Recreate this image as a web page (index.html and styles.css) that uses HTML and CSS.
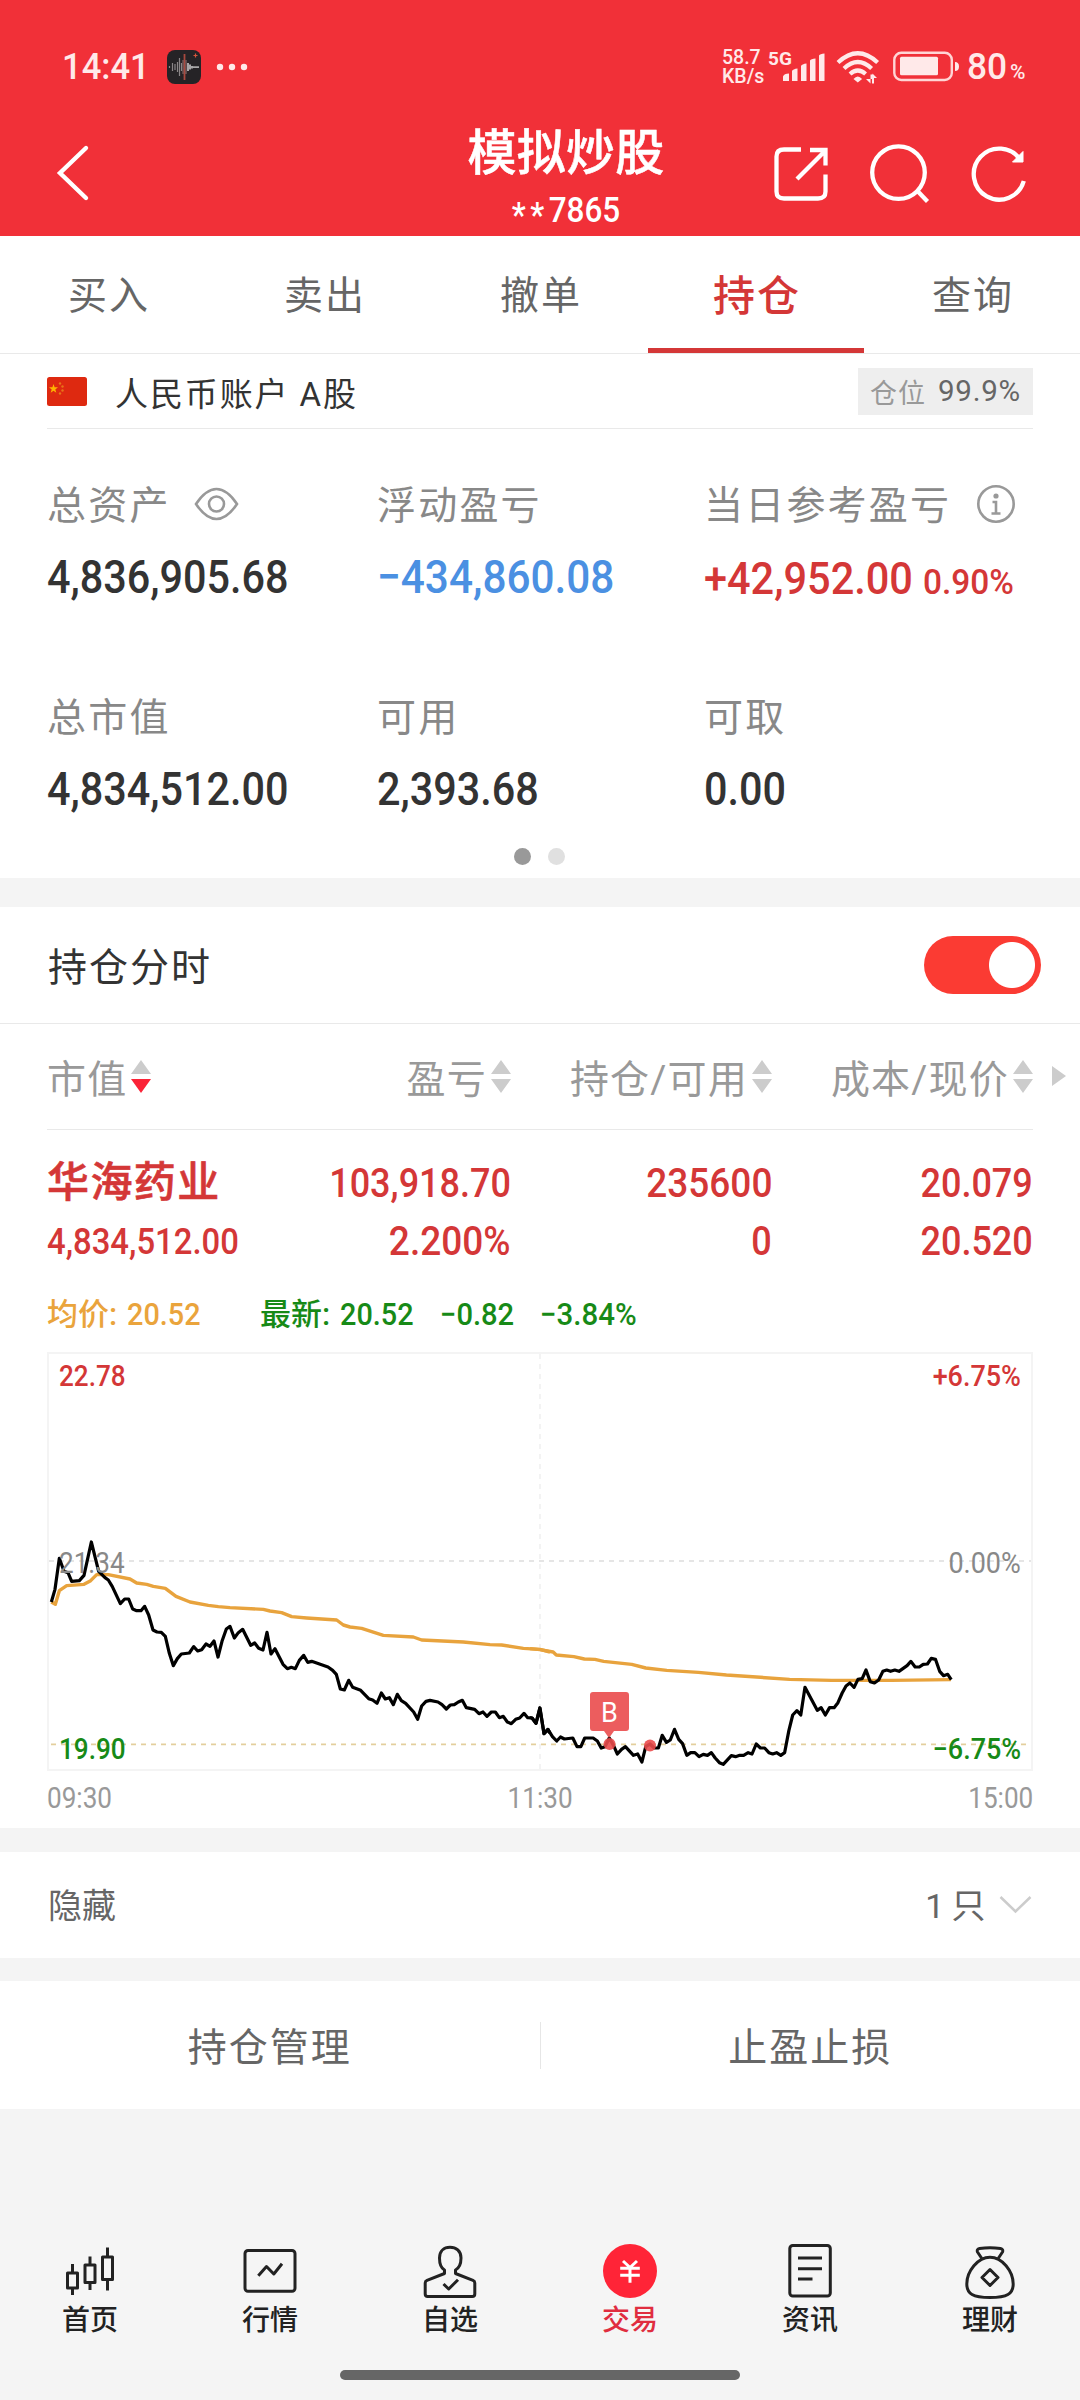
FILE: index.html
```html
<!DOCTYPE html>
<html lang="zh-CN">
<head>
<meta charset="utf-8">
<title>模拟炒股</title>
<link rel="stylesheet" href="styles.css">
</head>
<body>
<header class="top">
  <div class="status">
    <span class="clock"><span class="num">14:41</span></span>
    <svg class="app" width="34" height="34" viewBox="0 0 34 34"><rect width="34" height="34" rx="8" fill="#252326"/><path d="M2.500 16v2M5.500 13v8M8 14v6M10.500 12v10M12.500 8v18M14.500 13v8" stroke="#8b8688" stroke-width="1.200"/><path d="M17.500 4v26" stroke="#a8493f" stroke-width="1.800"/><path d="M16 10v14M19 10v14" stroke="#94716e"/><path d="M21 13v8M23 14.500v5M25 16v2.500M27 16.300v1.800M29 16.300v1.800M31 16.300v1.800" stroke="#eee" stroke-width="1.300"/><path d="M26.500 5.500h4M28.500 3.500v4" stroke="#d4553d" stroke-width="1.200"/></svg>
    <svg class="more" width="32" height="8" viewBox="0 0 32 8" fill="#ffe9e9"><circle cx="4" cy="4" r="3.200"/><circle cx="16" cy="4" r="3.200"/><circle cx="28" cy="4" r="3.200"/></svg>
    <span class="speed"><span>58.7</span><span>KB/s</span></span>
    <span class="net">5G</span>
    <svg class="sys" width="178" height="36" viewBox="782 49 178 36" fill="#ffe9e9">
      <path d="M783 81v-4.500q1-3 6-3V81zM792 81V71q1-2 5.500-2.500V81zM801 81V66q1-2 5.500-2.500V81zM810 81V60.500q1-1.500 5.500-2V81zM819 81V55.500q1-1.500 5.500-2V81z"/>
      <g fill="none" stroke="#ffe9e9" stroke-width="4.200"><path d="M838 62.500q19.800-18.500 39.600 0"/><path d="M844 68.500q13.800-13 27.600 0"/><path d="M850 74q7.800-7 15.600 0"/></g>
      <path d="M853.500 79q4.300-5 8.600 0l-4.300 3.500zM866 79l4.500 4.500V74.500h2v-1l4.500 4.500h-3v5.500h-2V79z"/>
      <rect x="894.300" y="52.800" width="57.500" height="27.200" rx="7" fill="none" stroke="#ffd5d5" stroke-width="2.400"/>
      <rect x="900" y="56.800" width="38" height="18.400" rx="1.500"/><path d="M955 62q4 0 4 4.500t-4 4.500z"/>
    </svg>
    <span class="bat"><span class="num">80</span></span><span class="pct">%</span>
  </div>
  <div class="titlebar">
    <svg width="34" height="58" viewBox="56 146 34 58"><path d="M86 150 60 175l26 25" fill="none" stroke="#fff" stroke-width="4.400" stroke-linecap="round"/></svg>
    <div class="title"><h1>模拟炒股</h1><p><span class="mask">**</span>7865</p></div>
    <svg width="256" height="62" viewBox="772 144 256 62" fill="none" stroke="#fff" stroke-width="4.300">
      <path d="M800 150.500h-17q-7.500 0-7.500 7v35q0 7 7.500 7h34q7.500 0 7.500-7v-17M809 151h15.500v15.500M824 152l-28 28"/>
      <circle cx="897.500" cy="173.600" r="26.300"/><path d="M916 191.500l10.500 11"/>
      <path d="M1019.500 161A25.500 25.500 0 1 0 1022.800 182"/><path d="M1022 152.500V163h-10.500z" fill="#fff" stroke-width="1"/>
    </svg>
  </div>
</header>

<nav class="tabs"><span>买入</span><span>卖出</span><span>撤单</span><span class="on">持仓</span><span>查询</span></nav>

<section class="account">
  <svg width="40" height="29" viewBox="0 0 40 29"><rect width="40" height="29" rx="2.500" fill="#de2910"/><path d="M6.500 7l1.100 3.300h3.400L8.300 12.400l1 3.300-2.800-2-2.800 2 1-3.300L2 10.300h3.400z" fill="#ffb400"/><g fill="#e8731a"><circle cx="13" cy="6.500" r="1.200"/><circle cx="15.500" cy="9.500" r="1.200"/><circle cx="15.500" cy="13.500" r="1.200"/><circle cx="13" cy="16.500" r="1.200"/></g></svg>
  <span class="name">人民币账户 A股</span>
  <span class="badge"><i>仓位</i><b>99.9%</b></span>
</section>

<section class="summary">
  <div class="grid">
    <div><p class="lab">总资产<svg class="eye" width="45" height="34" viewBox="0 0 45 34" fill="none" stroke="#999" stroke-width="2.600"><path d="M2 17Q12 2 22.500 2T43 17Q33 32 22.500 32T2 17z"/><circle cx="22.500" cy="17" r="7.500"/></svg></p><p class="val"><span class="num">4,836,905.68</span></p></div>
    <div><p class="lab">浮动盈亏</p><p class="val blue"><span class="num">−434,860.08</span></p></div>
    <div><p class="lab">当日参考盈亏<svg class="info" width="40" height="40" viewBox="0 0 40 40" fill="none" stroke="#999" stroke-width="2.600"><circle cx="20" cy="20" r="17.700"/><circle cx="20" cy="12" r="2.600" fill="#999" stroke="none"/><path d="M16.500 18H20v11.500M15.500 29.500h9"/></svg></p><p class="val red day"><span class="num">+42,952.00</span><span class="num rate">0.90%</span></p></div>
    <div><p class="lab">总市值</p><p class="val"><span class="num">4,834,512.00</span></p></div>
    <div><p class="lab">可用</p><p class="val"><span class="num">2,393.68</span></p></div>
    <div><p class="lab">可取</p><p class="val"><span class="num">0.00</span></p></div>
  </div>
  <div class="dots"><i></i><i></i></div>
</section>

<section class="switchrow"><span>持仓分时</span><i class="switch"></i></section>

<section class="holding">
  <div class="cols head">
    <span>市值<svg width="20" height="34" viewBox="0 0 20 34"><path d="M10 0l10 14H0z" fill="#ccc"/><path d="M0 19h20L10 33z" fill="#fb2337"/></svg></span>
    <span>盈亏<svg width="20" height="34" viewBox="0 0 20 34" fill="#ccc"><path d="M10 0l10 14H0zM0 19h20L10 33z"/></svg></span>
    <span>持仓/可用<svg width="20" height="34" viewBox="0 0 20 34" fill="#ccc"><path d="M10 0l10 14H0zM0 19h20L10 33z"/></svg></span>
    <span>成本/现价<svg width="20" height="34" viewBox="0 0 20 34" fill="#ccc"><path d="M10 0l10 14H0zM0 19h20L10 33z"/></svg></span>
    <i class="next"></i>
  </div>
  <div class="cols data first"><span class="stock">华海药业</span><span class="num">103,918.70</span><span class="num wide">235600</span><span class="num">20.079</span></div>
  <div class="cols data"><span class="num small">4,834,512.00</span><span class="num wide">2.200%</span><span class="num">0</span><span class="num">20.520</span></div>
  <div class="legend"><span class="avg">均价: <span class="num">20.52</span></span><span class="last">最新: <span class="num">20.52</span></span><span class="num chg">−0.82</span><span class="num chg2">−3.84%</span></div>
  <div class="chart">
    <svg width="986" height="419" viewBox="0 0 986 419" fill="none">
      <rect x="1" y="1" width="984" height="417" stroke="#f4f4f4" stroke-width="2"/>
      <path d="M493 2v415" stroke="#f0f0f0" stroke-width="1.500" stroke-dasharray="5 5"/>
      <path d="M2 209h982" stroke="#ddd" stroke-width="1.700" stroke-dasharray="5 5"/>
      <path d="M4 392.300h976" stroke="#e3cf9d" stroke-width="1.700" stroke-dasharray="5 5"/>
      <g stroke-linejoin="round">
        <g transform="translate(-17 -12) scale(.33333)">
          <polyline class="ma" points="64,786 76,793 88,752 110,737 162,733 182,722 200,704 235,704 300,717 320,729 350,733 370,739 406,745 438,769 480,786 535,796 565,800 600,803 700,808 720,813 755,818 785,830 830,834 920,840 940,855 960,861 995,865 1060,886 1150,891 1175,900 1300,906 1380,914 1415,915 1480,925 1530,928 1560,936"/>
          <polyline class="px" points="64,786 75,748 88,655 102,694 114,698 125,724 148,722 162,706 184,606 206,694 225,713 235,720 247,740 271,791 284,777 296,777 308,807 320,812 333,812 344,799 356,825 369,870 381,876 394,877 406,889 418,940 430,977 442,956 454,942 478,939 491,920 503,933 515,929 528,912 540,919 552,903 564,951 576,904 589,867 600,859 613,894 625,878 638,868 662,916 674,909 686,925 699,930 711,877 723,942 735,926 759,973 772,986 784,982 796,986 808,961 821,946 833,967 845,964 894,981 908,991 919,1003 931,1047 943,1050 956,1021 968,1042 992,1051 1016,1076 1028,1080 1041,1090 1054,1059 1066,1077 1078,1073 1090,1094 1102,1063 1114,1082 1127,1090 1151,1116 1163,1138 1175,1098 1188,1084 1200,1081 1224,1086 1236,1094 1249,1107 1261,1095 1273,1094 1285,1086 1297,1081 1309,1103 1334,1108 1347,1121 1359,1116 1371,1129 1384,1116 1396,1116 1408,1133 1420,1129 1432,1146 1444,1151 1457,1138 1469,1134 1482,1120 1493,1133 1506,1134 1518,1150 1530,1104 1542,1181 1554,1168 1560,1180"/>
        </g>
        <g transform="translate(483 -12) scale(.35075 .33333)">
          <polyline class="ma" points="0,926 28,929 66,936 75,945 125,950 155,957 185,958 210,964 290,973 330,984 390,991 480,997 560,1005 740,1018 860,1021 1030,1021 1200,1019"/>
          <polyline class="px" points="0,1133 6,1134 17,1150 28,1104 40,1181 51,1168 64,1190 76,1203 87,1191 98,1197 122,1194 134,1220 145,1220 156,1194 180,1194 192,1203 203,1224 214,1220 226,1194 238,1216 249,1242 261,1228 272,1220 295,1246 307,1242 319,1266 330,1220 342,1212 354,1224 366,1224 377,1186 389,1207 400,1200 412,1168 424,1198 435,1211 447,1246 458,1238 470,1238 482,1250 494,1243 506,1246 517,1238 528,1254 540,1268 551,1273 574,1247 586,1250 598,1246 609,1246 622,1238 633,1242 645,1212 657,1224 669,1224 681,1238 692,1242 703,1238 715,1246 726,1238 738,1172 749,1125 761,1112 772,1125 784,1042 819,1111 830,1103 842,1125 854,1103 867,1103 878,1088 890,1059 901,1038 912,1029 924,1042 935,1018 947,1016 958,990 970,1025 982,1029 994,1020 1006,994 1017,990 1028,994 1040,990 1052,994 1075,977 1086,964 1098,981 1110,981 1121,973 1133,972 1144,955 1156,958 1168,994 1179,1007 1191,1003 1201,1019"/>
        </g>
      </g>
      <g fill="#ea4b4d" fill-opacity=".9"><path d="M546 340h33a3 3 0 0 1 3 3v33a3 3 0 0 1-3 3h-12l-5 7-5-7h-11a3 3 0 0 1-3-3v-33a3 3 0 0 1 3-3z"/><circle cx="562.500" cy="392" r="6"/><circle cx="603" cy="393.500" r="6"/></g>
    </svg>
    <span class="tag">B</span>
    <div class="axis"><div class="red"><span class="num">22.78</span><span class="num">+6.75%</span></div><div class="gray"><span class="num">21.34</span><span class="num">0.00%</span></div><div class="green"><span class="num">19.90</span><span class="num">−6.75%</span></div></div>
  </div>
  <div class="times"><span class="num">09:30</span><span class="num">11:30</span><span class="num">15:00</span></div>
</section>

<section class="hidden-row"><span>隐藏</span><span class="count">1 只</span><svg width="33" height="20" viewBox="0 0 33 20"><path d="M1.500 2 16.500 16.500 31.500 2" fill="none" stroke="#ccc" stroke-width="2.500"/></svg></section>
<section class="actions"><span>持仓管理</span><i></i><span>止盈止损</span></section>

<footer class="nav">
  <a><svg viewBox="0 0 64 64"><path d="M9.500 33h10v15h-10zM14.500 24v9m0 15v7M27 25h10v17.500H27zM32 16.500V25m0 17.500V50M44.500 17h10v22.500h-10zM49.500 7.500V17m0 22.500v11"/></svg>首页</a>
  <a><svg viewBox="0 0 64 64"><rect x="7" y="10.500" width="50" height="40.700" rx="3"/><path d="M20.300 35.700 28.500 26.500l7.300 7.500L44 23.700"/></svg>行情</a>
  <a><svg viewBox="0 0 64 64"><path d="M26.500 30v3.500L9 40.300q-1.800.7-1.800 2.700v11q0 2.500 2.500 2.500h44.600q2.500 0 2.500-2.500V43q0-2-1.800-2.700L37.500 33.500V30C42 27.500 43 23 43 18c0-7-5-10.800-11-10.800S21.500 11 21.500 18c0 5 .5 9.500 5 12zM25.500 44l5.200 5L40 39.700"/></svg>自选</a>
  <a class="on"><svg viewBox="0 0 64 64"><circle cx="32" cy="31" r="27" fill="#ff2437" stroke="none"/><path stroke="#fff" d="M25 21l7 6.500 7-6.500M22.200 28.200h19.600M22.200 35.300h19.600M32 27v15.700"/></svg>交易</a>
  <a><svg viewBox="0 0 64 64"><rect x="11.800" y="5.500" width="40.500" height="50.500" rx="3"/><path d="M20 18h24M20 28.700h24M20 39h14.500"/></svg>资讯</a>
  <a><svg viewBox="0 0 64 64"><path d="M23.500 18l-4-6q-1-3 2-3.500 10.500-1.500 21 0 3 .5 2 3.500l-4 6M32 17.200C20 17.200 8.800 31 8.800 44c0 10 6.200 13.500 23.200 13.500S55.200 54 55.200 44C55.200 31 44 17.200 32 17.200zM32 29.500l8 8-8 8-8-8z"/></svg>理财</a>
</footer>
<div class="homebar"></div>
</body>
</html>
```
FILE: styles.css
```css
* { box-sizing: border-box; margin: 0; padding: 0; }
body { width: 1080px; height: 2400px; background: #f4f4f4; font-family: Roboto, "Noto Sans CJK SC", sans-serif; color: #333; overflow: hidden; }
i, b { font-style: normal; font-weight: inherit; }
svg { display: block; flex: none; }
section { background: #fff; }
.num { display: inline-block; transform: scaleX(.9); transform-origin: left center; white-space: nowrap; }
.red { color: #d43737; }
.blue { color: #4b90e2; }
.gray { color: #888; }
.green { color: #178a17; }

.top { height: 236px; background: #f13038; color: #ffe9e9; }
.status { height: 134px; display: flex; align-items: center; padding-left: 62px; font-size: 36px; font-weight: 500; line-height: 40px; }
.clock { width: 105px; }
.clock .num { transform: scaleX(.96); }
.more { margin-left: 15px; }
.speed { display: flex; flex-direction: column; margin-left: 474px; width: 46px; font-size: 19.500px; line-height: 19px; font-weight: 500; }
.net { width: 14px; font-size: 19px; font-weight: 700; line-height: 20px; margin-top: -17px; }
.bat { width: 43px; margin-left: 7px; }
.bat .num { transform: scaleX(.98); }
.pct { font-size: 21px; margin-top: 10px; }
.titlebar { display: flex; padding-left: 56px; color: #fff; }
.titlebar > svg { margin-top: 10px; }
.titlebar > svg:last-child { margin: 9px 0 0 107px; }
.title { width: 200px; margin: -11px 0 0 376px; text-align: center; }
.title h1 { font-size: 49px; line-height: 62px; font-weight: 500; letter-spacing: .3px; -webkit-text-stroke: .5px; }
.title p { font-size: 35px; line-height: 51px; font-weight: 500; transform: scaleX(.9); }
.mask { position: relative; top: 5px; letter-spacing: 5px; }

.tabs { height: 118px; background: #fff; border-bottom: 1px solid #e9e9e9; display: flex; }
.tabs span { flex: 1; text-align: center; font-size: 39px; letter-spacing: 2px; text-indent: 2px; line-height: 121px; color: #666; }
.tabs .on { font-size: 42px; font-weight: 500; color: #d43737; box-shadow: inset 0 -5px #d43737; height: 117px; }

.account { height: 74px; display: flex; align-items: center; padding: 0 47px; }
.account .name { margin: 1px 0 0 28px; font-size: 33px; letter-spacing: 1.900px; }
.account .badge { margin-left: auto; height: 47px; width: 175px; display: flex; align-items: center; justify-content: space-between; padding: 0 12px; background: #eee; font-size: 27px; color: #999; letter-spacing: 1px; }
.account b { font-size: 29.500px; color: #666; letter-spacing: .8px; }

.summary { height: 450px; padding-left: 47px; }
.summary::before { content: ""; display: block; height: 1px; width: 986px; background: #e9e9e9; margin-bottom: 47px; }
.grid { display: grid; grid-template-columns: 330px 327px 1fr; row-gap: 81px; }
.lab { height: 60px; line-height: 60px; font-size: 39px; letter-spacing: 2.200px; color: #888; display: flex; align-items: center; }
.eye { margin: -4px 0 0 23px; }
.info { margin: -4px 0 0 25px; }
.val { margin-top: 11px; height: 60px; line-height: 60px; font-size: 47px; font-weight: 500; }
.val .num { transform: scaleX(.88); }
.val.blue .num { transform: scaleX(.9); }
.day { font-size: 45px; position: relative; top: 2px; }
.day .num { transform: scaleX(.922); }
.day .rate { position: absolute; left: 219px; top: 3px; font-size: 34.500px; transform: scaleX(.97); }
.dots { display: flex; gap: 17px; justify-content: center; margin: 29px 49px 0 0; }
.dots i { width: 17px; height: 17px; border-radius: 50%; background: #999; }
.dots i + i { background: #e0e0e0; }

.switchrow { margin-top: 29px; height: 117px; padding: 0 39px 0 48px; display: flex; align-items: center; justify-content: space-between; font-size: 39px; letter-spacing: 2px; border-bottom: 1px solid #e9e9e9; }
.switchrow span { margin-top: -2px; }
.switch { width: 117px; height: 58px; border-radius: 29px; background: radial-gradient(circle at 88px 29px, #fff 22.500px, #fb3b33 23.500px); }

.holding { height: 805px; padding: 0 47px; border-bottom: 1px solid #f4f4f4; }
.cols { display: grid; grid-template-columns: 203px 261px 261px 261px; }
.cols > span { justify-self: end; }
.cols > span:first-child { justify-self: start; }
.head { height: 106px; border-bottom: 1px solid #e9e9e9; position: relative; }
.head span { display: flex; align-items: center; height: 103px; font-size: 39px; letter-spacing: 1.200px; color: #999; }
.head svg { margin: 2px 0 0 4px; }
.next { position: absolute; left: 1005px; top: 42px; border-left: 14px solid #ccc; border-top: 10px solid transparent; border-bottom: 10px solid transparent; }
.data { height: 58px; line-height: 58px; font-size: 40px; font-weight: 500; color: #d43737; }
.data .num { transform-origin: right center; }
.data .wide { transform: scaleX(.925); }
.data .small { font-size: 37px; transform-origin: left center; transform: scaleX(.888); }
.first { margin-top: 25px; }
.stock { font-size: 42px; letter-spacing: 1.400px; -webkit-text-stroke: .6px; margin-top: -1px; }
.legend { height: 81px; line-height: 88px; font-size: 31px; font-weight: 500; display: flex; color: #178a17; }
.avg { width: 213px; color: #eaa43c; }
.last { width: 180px; }
.avg .num, .last .num { margin-left: 2px; transform: scaleX(.93); }
.chg { width: 100px; transform: scaleX(.94); }
.chg2 { transform: scaleX(.95); }
.chart { position: relative; height: 419px; }
.ma, .px { stroke: #e8a33d; stroke-width: 3.400px; vector-effect: non-scaling-stroke; }
.px { stroke: #000; stroke-width: 3.200px; }
.tag { position: absolute; left: 543px; top: 341px; width: 39px; line-height: 40px; text-align: center; color: #fff; font-size: 27px; }
.axis { position: absolute; inset: 1px 0 -1px; padding: 0 12px; display: flex; flex-direction: column; justify-content: space-between; font-size: 29px; line-height: 46px; }
.axis div { display: flex; justify-content: space-between; font-weight: 500; }
.axis .gray { font-weight: 400; }
.axis .num + .num { transform-origin: right center; transform: scaleX(.93); }
.times { display: flex; justify-content: space-between; font-size: 29px; line-height: 55px; color: #999; }
.times .num { transform-origin: center; }
.times .num:first-child { transform-origin: left; }
.times .num:last-child { transform-origin: right; }

.hidden-row { margin-top: 23px; height: 106px; padding: 0 48px; display: flex; align-items: center; font-size: 34px; color: #666; }
.hidden-row span { margin-top: -3px; }
.count { margin-right: 14px; margin-left: auto; letter-spacing: -.6px; }
.actions { margin-top: 23px; height: 128px; display: flex; align-items: center; font-size: 39px; letter-spacing: 2px; color: #666; }
.actions span { flex: 1; text-align: center; margin-top: -3px; }
.actions i { width: 1px; height: 47px; background: #e6e6e6; }

.nav { background: #f5f5f5; margin-top: 131px; display: flex; height: 130px; }
.nav a { flex: 1; display: flex; flex-direction: column; align-items: center; font-size: 28px; line-height: 34px; font-weight: 500; color: #222; }
.nav .on { color: #e02d3f; }
.nav svg { width: 64px; height: 64px; fill: none; stroke: #222; stroke-width: 3px; stroke-linejoin: round; }
.homebar { width: 400px; height: 10px; border-radius: 5px; background: #666; margin: 0 auto; }
```
